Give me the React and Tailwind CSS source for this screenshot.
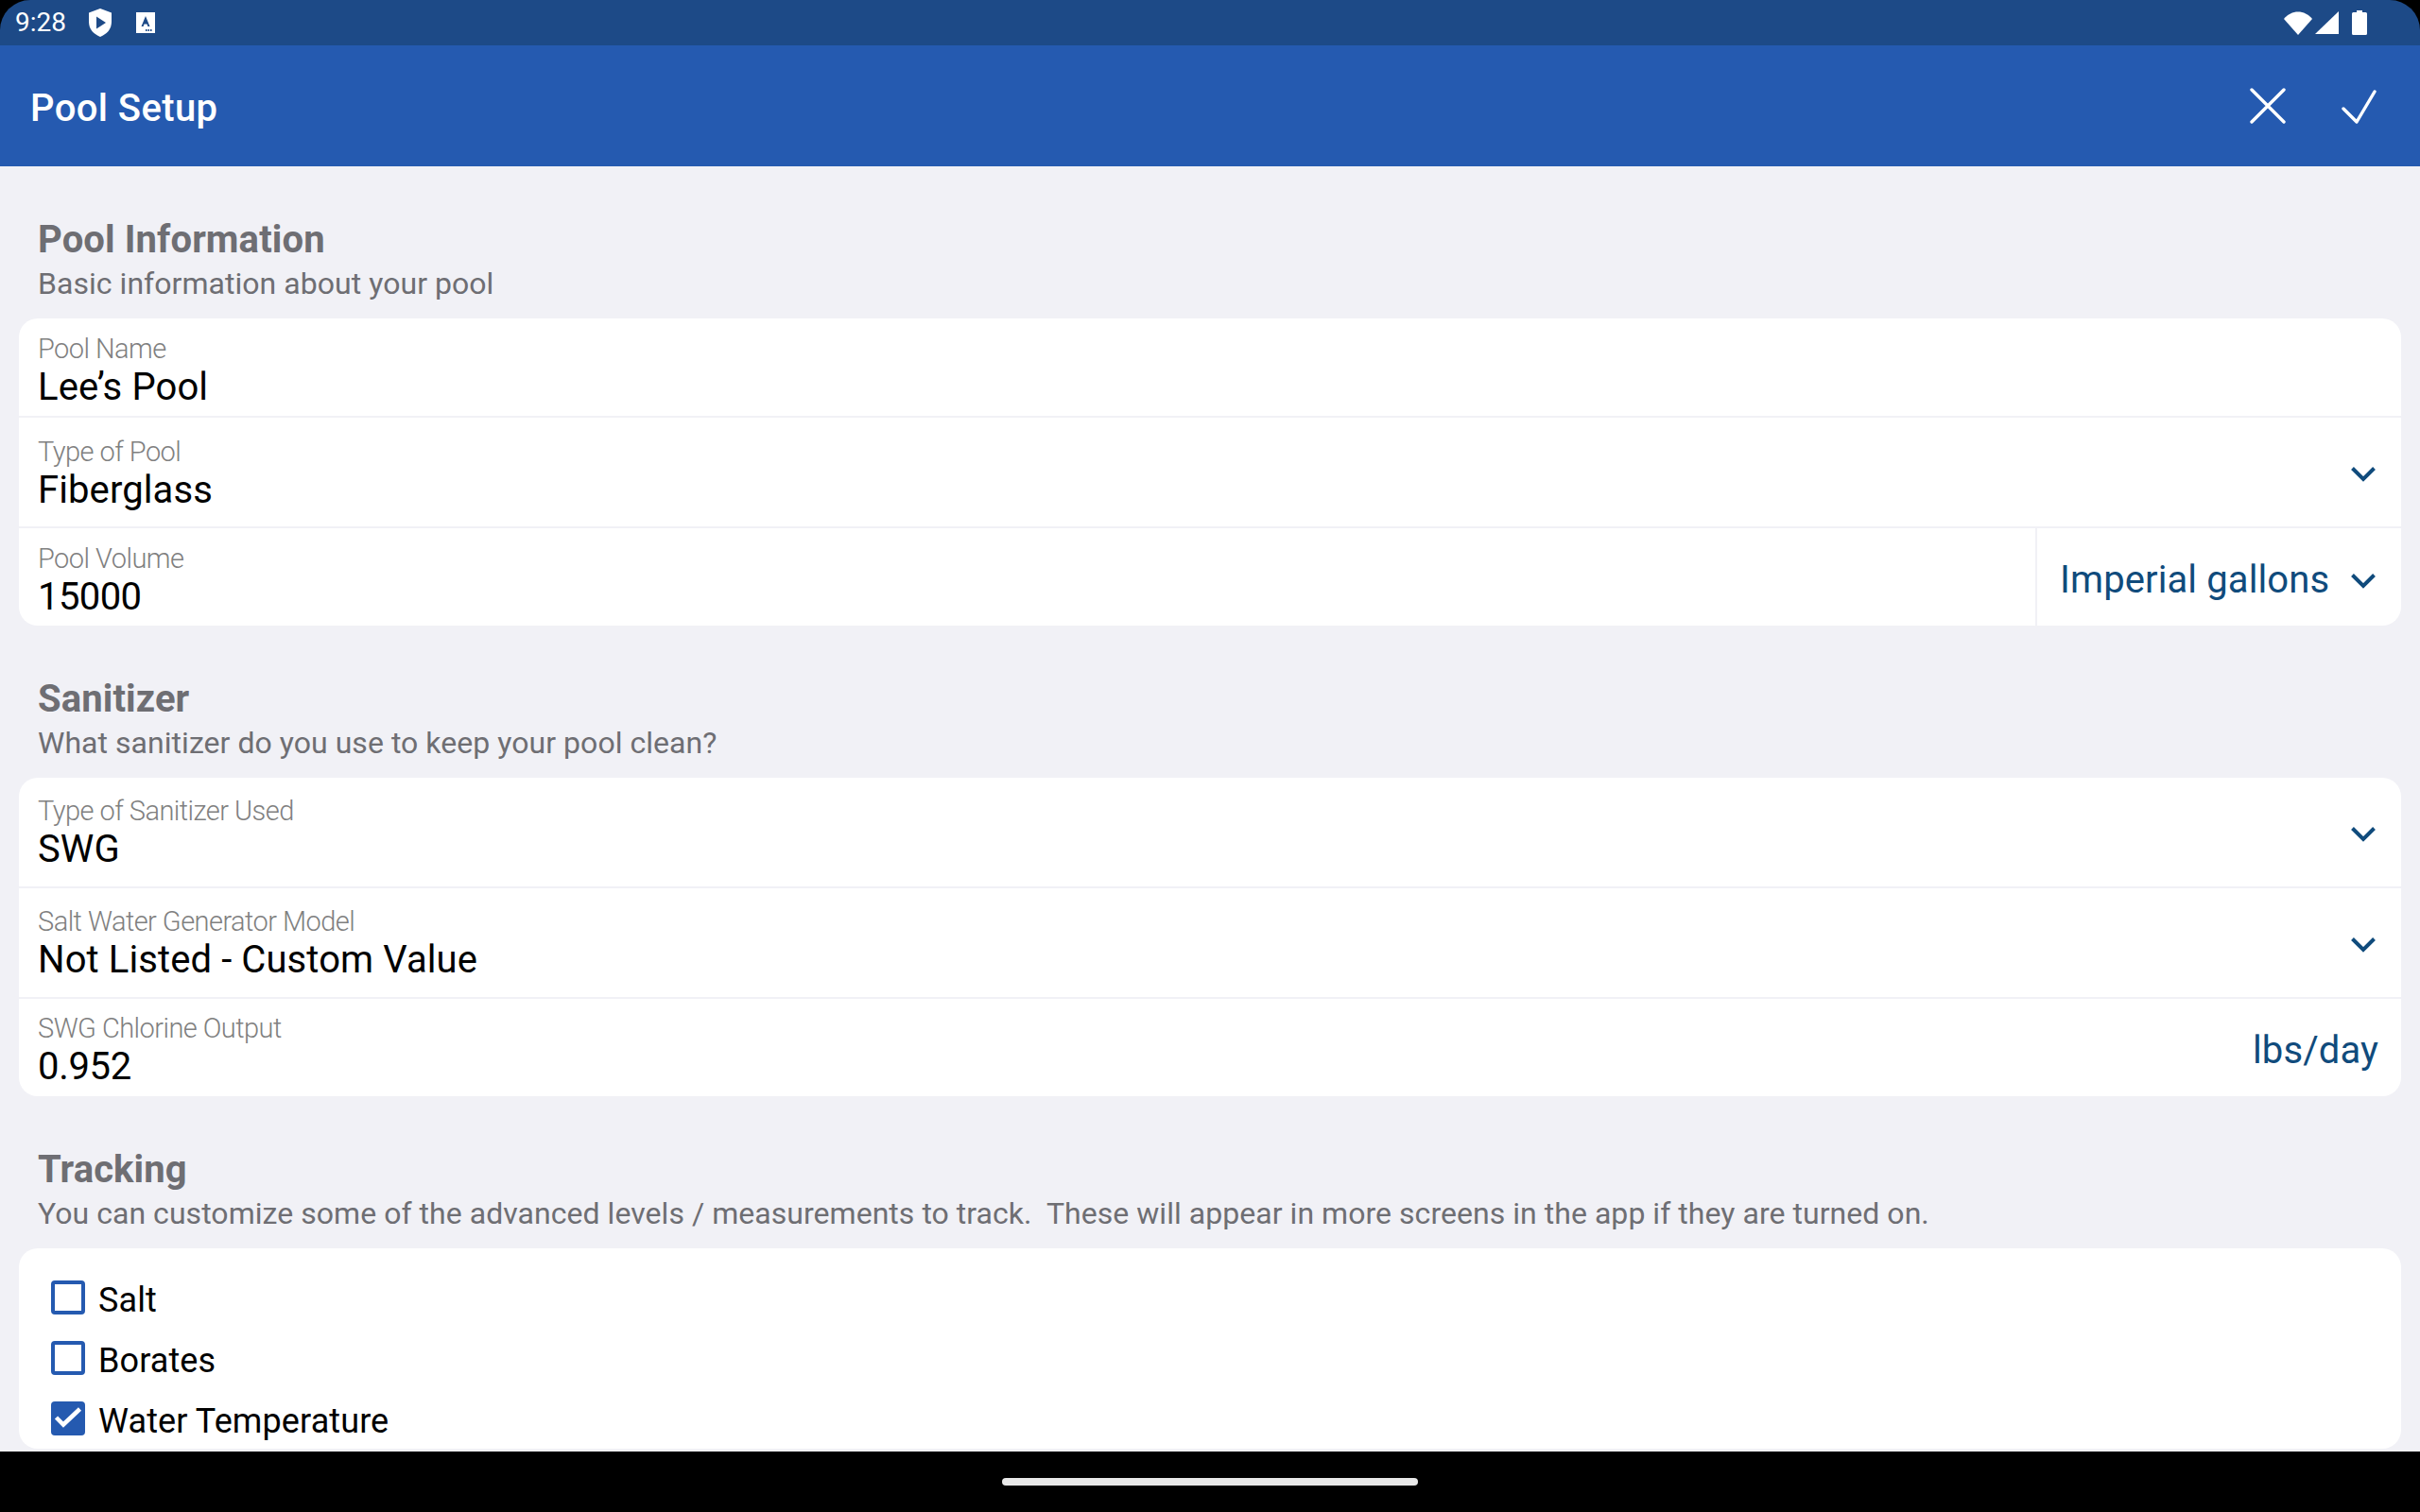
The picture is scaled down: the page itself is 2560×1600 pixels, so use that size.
import React from 'react';

const Chevron = ({ className = '' }) => (
    <svg width="26" height="16" viewBox="0 0 26 16" fill="none" className={`shrink-0 ${className}`}>
        <path d="M1.5 1.5 L13 13 L24.5 1.5" stroke="#104b7c" strokeWidth="4" />
    </svg>
);

const Field = ({ label, value, chevron, className = '', textClass = '', valueClass = '', children }) => (
    <div className={`flex items-stretch border-[#f1f1f6] ${className}`}>
        <div className={`flex-1 min-w-0 pl-5 ${textClass}`}>
            <div className="text-[29px] leading-[36px] font-light text-[#808080] tracking-[-0.55px]">{label}</div>
            <div className={`text-[40px] leading-[46px] text-black ${valueClass || 'tracking-[0.1px]'}`}>{value}</div>
        </div>
        {chevron && (
            <div className="flex items-center pr-[27px]">
                <Chevron className="mt-[5px]" />
            </div>
        )}
        {children}
    </div>
);

const SectionHead = ({ title, sub, className = '' }) => (
    <div className={`pl-10 ${className}`}>
        <div className="text-[40px] leading-[50px] font-bold text-[#6e6e73] tracking-[0.1px]">{title}</div>
        <div className="text-[32px] leading-[42px] text-[#6e6e73] tracking-[0.04px] whitespace-pre">{sub}</div>
    </div>
);

const CheckRow = ({ label, checked }) => (
    <div className="flex items-center h-16">
        {checked ? (
            <div className="w-9 h-9 rounded-[4px] bg-[#255ab0]">
                <svg width="36" height="36" viewBox="0 0 36 36" fill="none">
                    <path d="M5.5 17 L13 24.5 L30.5 8" stroke="white" strokeWidth="4.5" />
                </svg>
            </div>
        ) : (
            <div className="w-9 h-9 rounded-[4px] border-[4px] border-[#255ab0]" />
        )}
        <span className="ml-[14px] mt-[6px] text-[36px] tracking-[0.1px] text-black">{label}</span>
    </div>
);

export default function App() {
    return (
        <div className="w-full h-screen bg-black flex flex-col overflow-hidden font-[Roboto,sans-serif]">
            {/* status bar */}
            <div className="h-12 shrink-0 bg-[#1d4a87] rounded-t-[32px] flex items-center pl-4 pr-14 text-white">
                <span className="text-[28px] leading-none">9:28</span>
                <svg width="24" height="30" viewBox="0 0 24 30" className="ml-6">
                    <path d="M12 0 L24 4.5 V14 C24 22 19 27 12 30 C5 27 0 22 0 14 V4.5 Z" fill="white" />
                    <path d="M8 8.5 L18 15 L8 21.5 Z" fill="#1d4a87" />
                </svg>
                <svg width="20" height="22" viewBox="0 0 20 22" className="ml-[26px]">
                    <rect width="20" height="22" fill="white" />
                    <path d="M5.5 15 L10 4 L14.5 15 H12.4 L11.5 12.5 H8.5 L7.6 15 Z" fill="#1d4a87" />
                    <path d="M10 18 H11.5 V20 H10 Z M12.5 18 H14 V20 H12.5 Z M15 18 H16.5 V20 H15 Z" fill="#1d4a87" />
                </svg>
                <div className="flex-1" />
                <svg width="30" height="25" viewBox="0 0 30 25">
                    <path d="M0 8 C8 -2 22 -2 30 8 L15 25 Z" fill="white" />
                </svg>
                <svg width="25" height="24" viewBox="0 0 25 24" className="ml-[3px]">
                    <path d="M25 0 V24 H0 Z" fill="white" />
                </svg>
                <svg width="16" height="26" viewBox="0 0 16 26" className="ml-[14px]">
                    <path d="M5 0 H11 V2 H14.5 Q16 2 16 3.5 V24.5 Q16 26 14.5 26 H1.5 Q0 26 0 24.5 V3.5 Q0 2 1.5 2 H5 Z" fill="white" />
                </svg>
            </div>

            {/* app bar */}
            <div className="h-[128px] shrink-0 bg-[#255ab0] flex items-center pl-8 pr-[46px] text-white">
                <span className="flex-1 pt-[6px] text-[40px] font-medium tracking-[0.4px]">Pool Setup</span>
                <svg width="38" height="38" viewBox="0 0 38 38" fill="none">
                    <path d="M2 2 L36 36 M36 2 L2 36" stroke="white" strokeWidth="3.4" strokeLinecap="round" />
                </svg>
                <svg width="38" height="36" viewBox="0 0 38 36" fill="none" className="ml-[58px] mt-[2px]">
                    <path d="M3 20 L17 34 L36 2" stroke="white" strokeWidth="3.4" strokeLinecap="round" strokeLinejoin="round" />
                </svg>
            </div>

            {/* content */}
            <div className="flex-1 min-h-0 bg-[#f1f1f6] overflow-hidden pt-[53px]">
                <SectionHead title="Pool Information" sub="Basic information about your pool" />
                <div className="mx-5 mt-4 bg-white rounded-[20px] overflow-hidden">
                    <Field label="Pool Name" value="Lee’s Pool" className="h-[105px] border-b-2" textClass="pt-[14px]" />
                    <Field label="Type of Pool" value="Fiberglass" chevron className="h-[117px] border-b-2" textClass="pt-[18px]" />
                    <Field label="Pool Volume" value="15000" className="h-[103px]" textClass="pt-[14px]" valueClass="tracking-[-0.6px]">
                        <div className="w-[387px] border-l-2 border-[#f1f1f6] flex items-center justify-between pl-[24px] pr-[27px] text-[#104b7c] text-[40px] tracking-[0.1px]">
                            <span className="pt-[6px]">Imperial gallons</span>
                            <Chevron className="mt-[9px]" />
                        </div>
                    </Field>
                </div>

                <SectionHead
                    title="Sanitizer"
                    sub="What sanitizer do you use to keep your pool clean?"
                    className="mt-[53px]"
                />
                <div className="mx-5 mt-4 bg-white rounded-[20px] overflow-hidden">
                    <Field label="Type of Sanitizer Used" value="SWG" chevron className="h-[117px] border-b-2" textClass="pt-[17px]" />
                    <Field label="Salt Water Generator Model" value="Not Listed - Custom Value" chevron className="h-[117px] border-b-2" textClass="pt-[17px]" />
                    <Field label="SWG Chlorine Output" value="0.952" className="h-[103px]" textClass="pt-[13px]" valueClass="tracking-[-0.3px]">
                        <div className="flex items-center pr-6 text-[#104b7c] text-[40px] tracking-[0.1px]">
                            <span className="pt-[6px]">lbs/day</span>
                        </div>
                    </Field>
                </div>

                <SectionHead
                    title="Tracking"
                    sub="You can customize some of the advanced levels / measurements to track.  These will appear in more screens in the app if they are turned on."
                    className="mt-[53px]"
                />
                <div className="mx-5 mt-4 bg-white rounded-[20px] pt-5 pl-[34px]">
                    <CheckRow label="Salt" />
                    <CheckRow label="Borates" />
                    <CheckRow label="Water Temperature" checked />
                </div>
            </div>

            {/* nav bar */}
            <div className="h-16 shrink-0 bg-black flex justify-center pt-[28px]">
                <div className="w-[440px] h-2 rounded-full bg-[#e8e8e8]" />
            </div>
        </div>
    );
}
